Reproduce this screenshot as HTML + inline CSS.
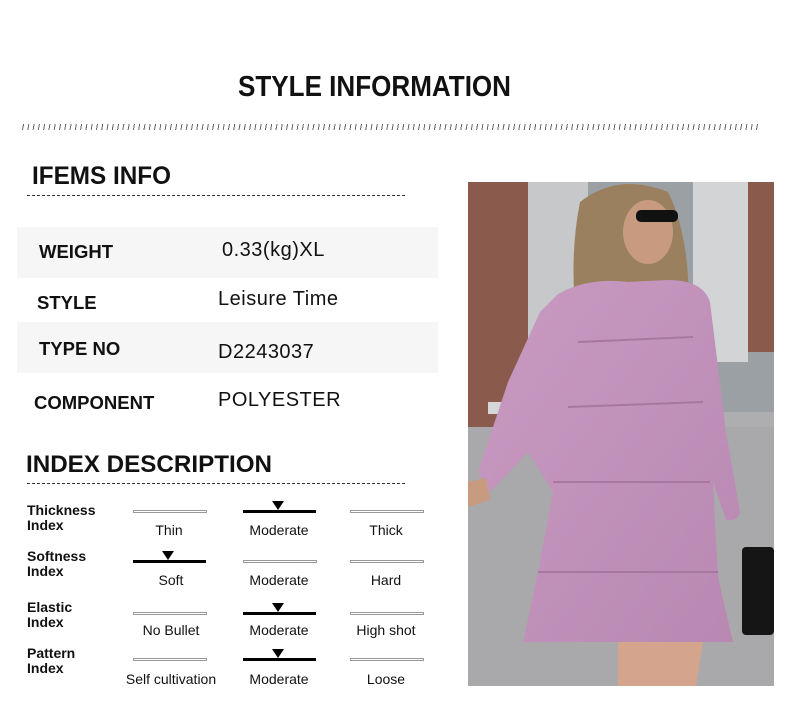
<!DOCTYPE html>
<html><head><meta charset="utf-8"><style>
body{margin:0;background:#fff;}
#p{position:relative;width:790px;height:714px;overflow:hidden;background:#fff;font-family:"Liberation Sans",sans-serif;color:#111}
.a{position:absolute;white-space:nowrap}
.slash{position:absolute;left:20px;top:124px;width:740px;height:6px;background:repeating-linear-gradient(100deg,transparent 0 3px,#666 3px 4px,transparent 4px 5.2px)}
.dash{position:absolute;height:0;border-top:1px dashed #333}
.gray{position:absolute;left:17px;width:421px;height:51px;background:#f6f6f6}
.lab{font-weight:bold;font-size:18.5px}
.val{font-size:20px;letter-spacing:.5px}
.il{font-weight:bold;font-size:14px;line-height:15px}
.ln{position:absolute;width:72px;height:1px;border:1px solid #999;background:#fff}
.dk{position:absolute;width:73px;height:3px;background:#000}
.tri{position:absolute;width:0;height:0;border-left:6px solid transparent;border-right:6px solid transparent;border-top:9px solid #000}
.op{font-size:14px;position:absolute;width:110px;text-align:center}
</style></head><body><div id="p">
<svg class="a" style="left:0;top:60px" width="790" height="50"><text x="238" y="36" textLength="273" lengthAdjust="spacingAndGlyphs" font-family="Liberation Sans" font-weight="bold" font-size="29" fill="#111">STYLE INFORMATION</text></svg>
<div class="slash"></div>
<svg class="a" style="left:0;top:155px" width="300" height="40"><text x="32" y="29" textLength="139" lengthAdjust="spacingAndGlyphs" font-family="Liberation Sans" font-weight="bold" font-size="25" fill="#111">IFEMS INFO</text></svg>
<div class="dash" style="left:27px;top:195px;width:378px"></div>
<div class="gray" style="top:227px"></div>
<div class="gray" style="top:322px"></div>
<div class="a lab" style="left:39px;top:241px">WEIGHT</div>
<div class="a val" style="left:222px;top:239px">0.33(kg)XL</div>
<div class="a lab" style="left:37px;top:292px">STYLE</div>
<div class="a val" style="left:218px;top:288px">Leisure Time</div>
<div class="a lab" style="left:39px;top:338px">TYPE NO</div>
<div class="a val" style="left:218px;top:341px">D2243037</div>
<div class="a lab" style="left:34px;top:392px">COMPONENT</div>
<div class="a val" style="left:218px;top:389px">POLYESTER</div>
<svg class="a" style="left:0;top:445px" width="300" height="40"><text x="26" y="27" textLength="246" lengthAdjust="spacingAndGlyphs" font-family="Liberation Sans" font-weight="bold" font-size="24" fill="#111">INDEX DESCRIPTION</text></svg>
<div class="dash" style="left:27px;top:483px;width:378px"></div>

<div class="a il" style="left:27px;top:503px">Thickness<br>Index</div>
<div class="ln" style="left:133px;top:510px"></div><div class="dk" style="left:243px;top:510px"></div><div class="tri" style="left:272px;top:501px"></div><div class="ln" style="left:350px;top:510px"></div>
<div class="op" style="left:114px;top:522px">Thin</div><div class="op" style="left:224px;top:522px">Moderate</div><div class="op" style="left:331px;top:522px">Thick</div>

<div class="a il" style="left:27px;top:549px">Softness<br>Index</div>
<div class="dk" style="left:133px;top:560px"></div><div class="tri" style="left:162px;top:551px"></div><div class="ln" style="left:243px;top:560px"></div><div class="ln" style="left:350px;top:560px"></div>
<div class="op" style="left:116px;top:572px">Soft</div><div class="op" style="left:224px;top:572px">Moderate</div><div class="op" style="left:331px;top:572px">Hard</div>

<div class="a il" style="left:27px;top:600px">Elastic<br>Index</div>
<div class="ln" style="left:133px;top:612px"></div><div class="dk" style="left:243px;top:612px"></div><div class="tri" style="left:272px;top:603px"></div><div class="ln" style="left:350px;top:612px"></div>
<div class="op" style="left:116px;top:622px">No Bullet</div><div class="op" style="left:224px;top:622px">Moderate</div><div class="op" style="left:331px;top:622px">High shot</div>

<div class="a il" style="left:27px;top:646px">Pattern<br>Index</div>
<div class="ln" style="left:133px;top:658px"></div><div class="dk" style="left:243px;top:658px"></div><div class="tri" style="left:272px;top:649px"></div><div class="ln" style="left:350px;top:658px"></div>
<div class="op" style="left:116px;top:671px">Self cultivation</div><div class="op" style="left:224px;top:671px">Moderate</div><div class="op" style="left:331px;top:671px">Loose</div>

<svg class="a" style="left:468px;top:182px" width="306" height="504" viewBox="0 0 306 504">
<defs><linearGradient id="st" x1="0" y1="0" x2="0" y2="1"><stop offset="0" stop-color="#b8b8ba"/><stop offset="1" stop-color="#a3a3a6"/></linearGradient>
<linearGradient id="dr" x1="0" y1="0" x2="1" y2="1"><stop offset="0" stop-color="#c99ac2"/><stop offset="1" stop-color="#b888b2"/></linearGradient></defs>
<rect width="306" height="504" fill="url(#st)"/>
<rect x="0" y="0" width="306" height="230" fill="#9aa0a4"/>
<rect x="0" y="0" width="60" height="245" fill="#8a5b4c"/>
<rect x="60" y="0" width="60" height="230" fill="#c6c8ca"/>
<rect x="225" y="0" width="55" height="180" fill="#d2d4d6"/>
<rect x="280" y="0" width="26" height="170" fill="#8a5b4c"/>
<rect x="20" y="220" width="100" height="12" fill="#d6d6d6"/>
<rect x="0" y="245" width="306" height="259" fill="#a9a9ac"/>
<path d="M112 20 Q150 -10 200 10 Q225 60 220 150 L110 150 Q100 80 112 20Z" fill="#9b8060"/>
<path d="M130 120 Q120 140 115 160 L140 150Z M210 110 L225 160 L200 140Z" fill="#d9c7a0"/>
<ellipse cx="180" cy="50" rx="25" ry="32" fill="#c89a80"/>
<rect x="168" y="28" width="42" height="12" rx="5" fill="#111"/>
<path d="M90 112 Q120 95 160 100 L200 98 Q235 98 242 120 L258 250 L272 330 Q270 340 258 338 L245 300 L250 395 L265 460 L55 460 L70 390 L85 310 L60 270 L22 310 L10 290 L40 200 L72 130 Z" fill="url(#dr)"/>
<path d="M70 390 L250 390 M85 300 L242 300 M100 225 L235 220 M110 160 L225 155" stroke="#a7789f" stroke-width="2" fill="none"/>
<path d="M150 460 L235 460 L228 504 L150 504Z" fill="#d4a58c"/>
<rect x="274" y="365" width="32" height="88" rx="4" fill="#151515"/>
<path d="M0 300 L18 296 L22 318 L0 325Z" fill="#c89a80"/>
</svg>
</div></body></html>
